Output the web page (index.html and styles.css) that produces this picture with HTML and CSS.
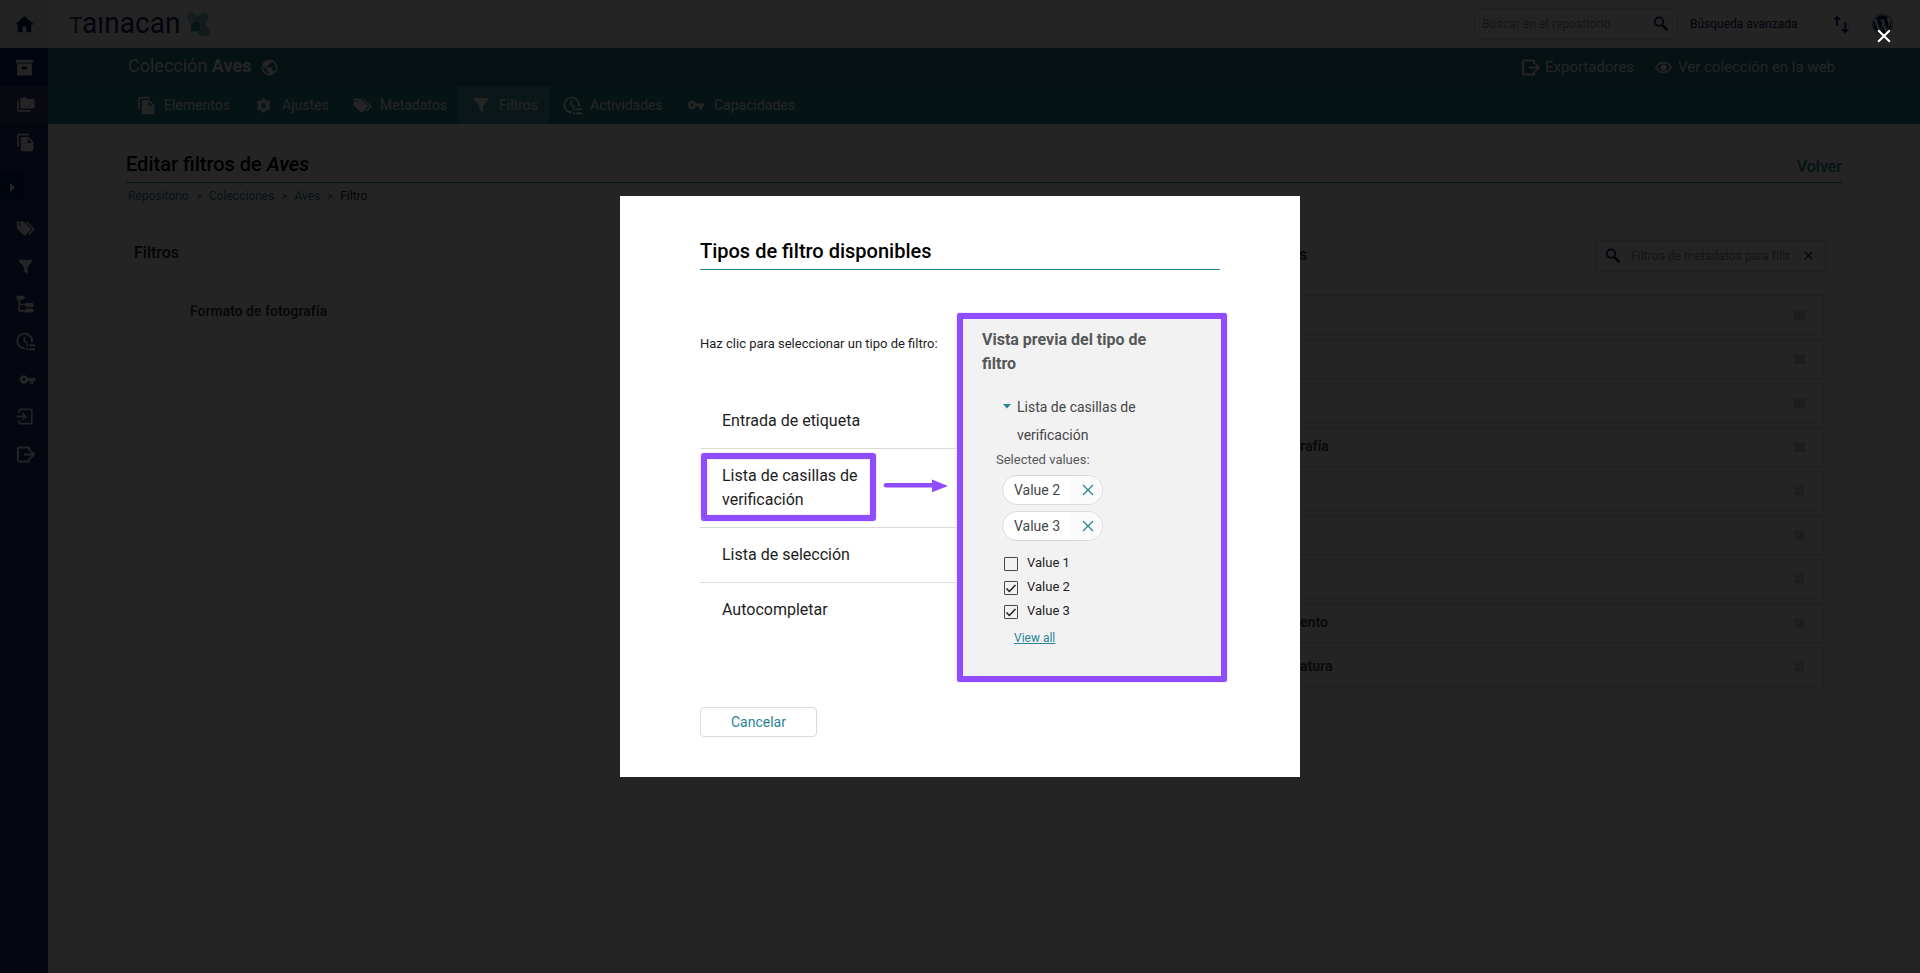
FILE: index.html
```
<!DOCTYPE html>
<html lang="es">
<head>
<meta charset="utf-8">
<title>Tainacan</title>
<link rel="stylesheet" href="styles.css">
</head>
<body>
<svg class="defs" width="0" height="0" aria-hidden="true">
  <symbol id="home" viewBox="0 0 24 24"><path d="M10 20v-6h4v6h5v-8h3L12 3 2 12h3v8z"/></symbol>
  <symbol id="archive" viewBox="0 0 24 24"><path fill-rule="evenodd" d="M2 3h20v3.500H2zM3.500 7.500h17V21h-17zM9 11v3h6v-3z"/></symbol>
  <symbol id="folder" viewBox="0 0 24 24"><path d="M10 3H1v19h22V5H12z"/></symbol>
  <symbol id="folders" viewBox="0 0 24 24"><path d="M3.500 7H1.500v12a2 2 0 0 0 2 2H18.500v-2H3.500zM21.500 5h-7l-2-2H7.500a2 2 0 0 0-2 2v10a2 2 0 0 0 2 2h14a2 2 0 0 0 2-2V7a2 2 0 0 0-2-2z"/></symbol>
  <symbol id="copy" viewBox="0 0 24 24"><path fill-rule="evenodd" d="M16 1H3.500a2 2 0 0 0-2 2v14h2V3H16zM15.500 5H8a2 2 0 0 0-2 2v14a2 2 0 0 0 2 2h12a2 2 0 0 0 2-2V11.500zM14.500 6.700L20.300 12.500H14.500z"/></symbol>
  <symbol id="tags" viewBox="0 0 24 24"><path fill-rule="evenodd" d="M2 3h7.500l9 9a1.500 1.500 0 0 1 0 2l-6.500 6.500a1.500 1.500 0 0 1-2 0L1 12V4a1 1 0 0 1 1-1zM4.500 5.200a1.300 1.300 0 1 0 .1 0z"/><path d="M12 3h2l9 9a1.500 1.500 0 0 1 0 2l-6 6-1.300-1.300 5.300-5.700z"/></symbol>
  <symbol id="filter" viewBox="0 0 24 24"><path d="M2.500 2.500h19v2L15 13v9l-5-3v-6L2.500 4.500z"/></symbol>
  <symbol id="tree" viewBox="0 0 24 24"><path d="M1 1h8l3 2.500L9 6H5v5h7v-1h9l2 2.500-2 2.500h-9v-2H5v6h7v-2h9l2 2.500-2 2.500h-9v-1H3V6H1z"/></symbol>
  <symbol id="activity" viewBox="0 0 24 24"><path d="M11 22a10.500 10.500 0 1 1 10.400-9H18.600A8 8 0 1 0 11 19.300zM9.500 6h2.200v5l4 2.500-1.200 1.800-5-3.200zM12.500 15.500h2.500V18h-2.500zm4 0H24V18h-7.500zM12.500 20.500h2.500V23h-2.500zm4 0H24V23h-7.500z"/></symbol>
  <symbol id="key" viewBox="0 0 24 24"><path fill-rule="evenodd" d="M12.500 10a6 6 0 1 0 0 4H16v4h4v-4h3v-4zM7 10a2 2 0 1 1 0 4 2 2 0 0 1 0-4z"/></symbol>
  <symbol id="import" viewBox="0 0 24 24"><path d="M5 7.500H3V4a2 2 0 0 1 2-2h14a2 2 0 0 1 2 2v16a2 2 0 0 1-2 2H5a2 2 0 0 1-2-2v-3.500h2V20h14V4H5zM1 10.800h8.500L7 8.300l1.500-1.500L14 12l-5.500 5.200L7 15.700l2.500-2.500H1z"/></symbol>
  <symbol id="export" viewBox="0 0 24 24"><path d="M18 7.500h-2.500V4.500H3.800v15h11.700v-3H18V20a2 2 0 0 1-2 2H3.300a2 2 0 0 1-2-2V4a2 2 0 0 1 2-2H16a2 2 0 0 1 2 2zM10 10.700h9.500L17.500 8 19 6.700l5.500 5.300-5.500 5.300-1.500-1.400 2-2.600H10z"/></symbol>
  <symbol id="gear" viewBox="0 0 24 24"><path d="M19.430 12.980c.04-.32.07-.64.07-.98s-.03-.66-.07-.98l2.110-1.650c.19-.15.24-.42.120-.64l-2-3.460c-.12-.22-.39-.3-.61-.22l-2.490 1c-.52-.4-1.080-.73-1.690-.98l-.38-2.650C14.460 2.180 14.250 2 14 2h-4c-.25 0-.46.18-.49.42l-.38 2.650c-.61.25-1.170.59-1.690.98l-2.490-1c-.23-.09-.49 0-.61.22l-2 3.460c-.13.22-.07.49.12.64l2.110 1.650c-.04.32-.07.65-.07.98s.03.66.07.98l-2.110 1.650c-.19.15-.24.42-.12.64l2 3.460c.12.22.39.3.61.22l2.490-1c.52.4 1.080.73 1.690.98l.38 2.650c.03.24.24.42.49.42h4c.25 0 .46-.18.49-.42l.38-2.650c.61-.25 1.170-.59 1.690-.98l2.490 1c.23.09.49 0 .61-.22l2-3.460c.12-.22.07-.49-.12-.64zM12 15.500a3.500 3.500 0 1 1 0-7 3.500 3.500 0 0 1 0 7z"/></symbol>
  <symbol id="globe" viewBox="0 0 24 24"><path d="M12 2a10 10 0 1 0 0 20 10 10 0 0 0 0-20zm-1 17.930A8 8 0 0 1 4.210 10.210L9 15v1a2 2 0 0 0 2 2zm6.900-2.540A2 2 0 0 0 16 16h-1v-3a1 1 0 0 0-1-1H8v-2h2a1 1 0 0 0 1-1V7h2a2 2 0 0 0 2-2v-.41a8 8 0 0 1 2.900 12.800z"/></symbol>
  <symbol id="eye" viewBox="0 0 24 24"><path fill-rule="evenodd" d="M12 4C6.500 4 2 7.300 0 12c2 4.700 6.500 8 12 8s10-3.300 12-8c-2-4.700-6.500-8-12-8zm0 2.300c4.300 0 7.700 2.200 9.400 5.700-1.700 3.500-5.100 5.700-9.400 5.700S4.300 15.500 2.600 12C4.300 8.500 7.700 6.300 12 6.300zM12 7.700a4.300 4.300 0 1 0 0 8.600 4.300 4.300 0 0 0 0-8.600z"/></symbol>
  <symbol id="search" viewBox="0 0 24 24"><circle cx="9" cy="8.500" r="6.300" fill="none" stroke="currentColor" stroke-width="2.600"/><path d="M14 14l6.500 6" fill="none" stroke="currentColor" stroke-width="4" stroke-linecap="round"/></symbol>
  <symbol id="cross" viewBox="0 0 12 12"><path d="M1 1l10 10M11 1L1 11" fill="none" stroke="currentColor" stroke-width="var(--w, 1.500)"/></symbol>
  <symbol id="updown" viewBox="0 0 24 24"><path d="M5.300 14V6H1.500L6.500 1l5 5H7.700v8zM15.500 9H18v9h4l-5.500 5-5.500-5h4.500z"/></symbol>
</svg>

<div class="app">
  <aside class="sidebar">
    <div class="side home"><svg class="i24"><use href="#home"/></svg></div>
    <div class="side repo"><svg class="i20"><use href="#archive"/></svg></div>
    <div class="side active"><svg class="i19"><use href="#folders"/></svg></div>
    <div class="side"><svg class="i19"><use href="#copy"/></svg></div>
    <div class="expand"><svg width="5" height="9" viewBox="0 0 5 9"><path d="M0 0l5 4.500L0 9z"/></svg></div>
    <div class="side"><svg class="i19"><use href="#tags"/></svg></div>
    <div class="side"><svg class="i17"><use href="#filter"/></svg></div>
    <div class="side"><svg class="i19"><use href="#tree"/></svg></div>
    <div class="side"><svg class="i19"><use href="#activity"/></svg></div>
    <div class="side key"><svg class="i17"><use href="#key"/></svg></div>
    <div class="side"><svg class="i19"><use href="#import"/></svg></div>
    <div class="side"><svg class="i19"><use href="#export"/></svg></div>
  </aside>

  <div class="main">
    <header class="topbar">
      <svg class="logo" width="150" height="48" viewBox="0 0 150 48">
        <text x="21.500" y="32.500" textLength="111" lengthAdjust="spacingAndGlyphs"><tspan class="cap">T</tspan>aınacan</text>
      </svg>
      <svg class="flower" width="26" height="26" viewBox="0 0 26 26">
        <ellipse cx="8" cy="8.500" rx="5.400" ry="7.800" transform="rotate(-22 8 8.500)" fill="#8dbfc9" opacity=".85"/>
        <ellipse cx="16.500" cy="9" rx="5.400" ry="8.300" transform="rotate(38 16.500 9)" fill="#6fabb8" opacity=".8"/>
        <ellipse cx="17.500" cy="18.500" rx="5.600" ry="8.300" transform="rotate(-52 17.500 18.500)" fill="#6fabb8" opacity=".85"/>
        <path d="M5.500 20.500l1-6.500c2-4 6-4 8-1.500 2 4-1 8-5 8z" fill="#1f8080" opacity=".9"/>
      </svg>
      <div class="topsearch"><span>Buscar en el repositorio</span><svg class="i16"><use href="#search"/></svg></div>
      <a class="advanced">Búsqueda avanzada</a>
      <svg class="sort"><use href="#updown"/></svg>
      <svg class="wp" width="21" height="21" viewBox="0 0 122.520 122.520"><path d="M8.700 61.260c0 20.800 12.100 38.780 29.600 47.300L13.300 39.870a52.350 52.350 0 0 0-4.600 21.390zM96.700 58.610c0-6.500-2.300-11-4.300-14.500-2.700-4.300-5.200-8-5.200-12.300 0-4.800 3.700-9.300 8.900-9.300h.7a52.350 52.350 0 0 0-79.100 9.900l3.400.1c5.500 0 14-.7 14-.7 2.800-.2 3.100 4 .3 4.300 0 0-2.800.3-6 .5l19.100 56.900 11.500-34.500-8.200-22.400c-2.800-.2-5.500-.5-5.500-.5-2.800-.2-2.500-4.500.3-4.300 0 0 8.700.7 13.800.7 5.500 0 14-.7 14-.7 2.800-.2 3.200 4 .3 4.300 0 0-2.800.3-6 .5l19 56.400 5.200-17.500c2.300-7.200 4-12.400 4-16.900zM62.200 65.860l-15.800 45.800a52.550 52.550 0 0 0 32.300-.8l-.4-.7zM107.400 36.060c1 7.200.1 14.300-3.100 22.300l-16 46.200a52.350 52.350 0 0 0 19.100-68.500z"/><circle cx="61.260" cy="61.260" r="59" fill="none" stroke="currentColor" stroke-width="4"/></svg>
    </header>
    <div class="band">
      <h1>Colección <b>Aves</b></h1><svg class="globe"><use href="#globe"/></svg>
      <div class="band-links">
        <svg class="i19"><use href="#export"/></svg><span class="exp">Exportadores</span>
        <svg class="i17"><use href="#eye"/></svg><span class="see">Ver colección en la web</span>
      </div>
    </div>
    <nav class="tabs">
      <a class="tab"><svg><use href="#copy"/></svg>Elementos</a>
      <a class="tab t2"><svg><use href="#gear"/></svg>Ajustes</a>
      <a class="tab t3"><svg><use href="#tags"/></svg>Metadatos</a>
      <a class="tab t4 current"><svg><use href="#filter"/></svg>Filtros</a>
      <a class="tab t5"><svg><use href="#activity"/></svg>Actividades</a>
      <a class="tab t6"><svg><use href="#key"/></svg>Capacidades</a>
    </nav>
    <section class="page">
      <div class="page-title"><h2>Editar filtros de <i>Aves</i></h2><a>Volver</a></div>
      <div class="crumbs"><a>Repositorio</a><s>&gt;</s><a>Colecciones</a><s>&gt;</s><a>Aves</a><s>&gt;</s><span>Filtro</span></div>
      <div class="columns">
        <div class="filters"><h3>Filtros</h3><p>Formato de fotografía</p></div>
        <div class="available">
          <div class="available-head"><h3>s</h3>
            <div class="metasearch"><svg class="i16"><use href="#search"/></svg><span>Filtros de metadatos para filtr</span><svg class="clear"><use href="#cross"/></svg></div>
          </div>
          <div class="rows">
            <div class="row"><svg><use href="#folder"/></svg></div>
            <div class="row"><svg><use href="#folder"/></svg></div>
            <div class="row"><svg><use href="#folder"/></svg></div>
            <div class="row"><span>rafía</span><svg><use href="#folder"/></svg></div>
            <div class="row"><svg><use href="#archive"/></svg></div>
            <div class="row"><svg><use href="#archive"/></svg></div>
            <div class="row"><svg><use href="#archive"/></svg></div>
            <div class="row"><span>ento</span><svg><use href="#archive"/></svg></div>
            <div class="row"><span>atura</span><svg><use href="#archive"/></svg></div>
          </div>
        </div>
      </div>
    </section>
  </div>
</div>

<div class="overlay">
  <svg class="close"><use href="#cross"/></svg>
  <div class="modal">
    <h2 class="modal-title">Tipos de filtro disponibles</h2>
    <div class="modal-body">
      <div class="types">
        <p class="hint">Haz clic para seleccionar un tipo de filtro:</p>
        <div class="type">Entrada de etiqueta</div>
        <div class="type">Lista de casillas de<br>verificación
          <div class="mark"></div>
          <svg class="arrow" width="66" height="14" viewBox="0 0 66 14"><path d="M3 6.300H50" stroke="#8f4dff" stroke-width="4.600" stroke-linecap="round"/><path d="M49 .5L65 7 49 13.200z" fill="#8f4dff"/></svg>
        </div>
        <div class="type">Lista de selección</div>
        <div class="type">Autocompletar</div>
      </div>
      <div class="preview">
        <h3>Vista previa del tipo de<br>filtro</h3>
        <div class="collapse"><svg width="8" height="5" viewBox="0 0 8 5"><path d="M0 0h8L4 4.500z"/></svg><span>Lista de casillas de<br>verificación</span></div>
        <p class="selected">Selected values:</p>
        <div class="chip"><span>Value 2</span><div><svg><use href="#cross"/></svg></div></div>
        <div class="chip"><span>Value 3</span><div><svg><use href="#cross"/></svg></div></div>
        <div class="checks">
          <label><i class="box"></i>Value 1</label>
          <label><i class="box"><svg viewBox="0 0 12 12"><path d="M1.500 6.500l2.800 3L10.500 3"/></svg></i>Value 2</label>
          <label><i class="box"><svg viewBox="0 0 12 12"><path d="M1.500 6.500l2.800 3L10.500 3"/></svg></i>Value 3</label>
        </div>
        <a class="viewall">View all</a>
      </div>
    </div>
    <button class="cancel">Cancelar</button>
  </div>
</div>
</body>
</html>
```
FILE: styles.css
```
* { box-sizing: border-box; }
body { margin: 0; width: 1920px; height: 973px; overflow: hidden; font-family: Roboto, "Liberation Sans", sans-serif; background: #fff; color: #1d1d1d; }
h1, h2, h3, p { margin: 0; font-weight: 500; }
svg { flex: none; fill: currentColor; display: block; }
.defs { position: absolute; }
.i24 { width: 23px; height: 23px; }
.i20 { width: 21px; height: 21px; }
.i19 { width: 19px; height: 19px; }
.i17 { width: 17px; height: 17px; }
.i16 { width: 16px; height: 16px; }

.app { display: flex; height: 973px; }
.sidebar { width: 48px; background: #1f2f70; color: #fff; display: flex; flex-direction: column; }
.side { height: 37.600px; display: flex; align-items: center; justify-content: center; padding-left: 2px; }
.home { height: 48px; background: #f2f2f2; color: #01295c; padding: 0; }
.repo { height: 38px; background: #01295c; padding: 1px 0 0; }
.active { background: #3a4170; }
.key { padding-left: 7px; }
.expand { width: 25px; height: 25px; margin: 13px 0 11px; background: #01295c; display: flex; align-items: center; padding: 2px 0 0 10px; }

.main { flex: 1; display: flex; flex-direction: column; }
.topbar { height: 48px; display: flex; align-items: center; color: #01295c; }
.logo text { font-size: 30px; fill: #1c2452; }
.logo .cap { font-size: 22.500px; }
.flower { margin-left: -13px; margin-right: 1263px; }
.topsearch { width: 204px; height: 32px; border: 1px solid #dbdbdb; display: flex; align-items: center; justify-content: space-between; padding: 0 8px 0 7px; font-size: 12px; letter-spacing: .12px; }
.topsearch span { color: #898d8f; }
.advanced { font-size: 12px; margin-left: 12px; width: 107px; white-space: nowrap; }
.sort { width: 19px; height: 19px; margin-left: 35px; }
.wp { margin-left: 21px; }

.band { height: 38px; background: #257787; color: #fff; display: flex; align-items: center; padding-left: 80px; }
.band h1 { font-size: 18px; font-weight: 400; width: 123px; white-space: nowrap; padding-bottom: 4px; }
.globe { width: 19px; height: 19px; margin: 1px 0 0 9px; }
.band-links { margin-left: auto; margin-right: 85px; display: flex; align-items: center; font-size: 15px; white-space: nowrap; }
.exp { width: 89px; margin: 0 21px 0 5px; }
.see { width: 157px; margin-left: 6px; }
.tabs { height: 38px; background: #298596; color: #fff; display: flex; padding-left: 75px; }
.tab { width: 118px; padding-left: 14px; display: flex; align-items: center; gap: 7px; font-size: 14px; white-space: nowrap; }
.tab svg { width: 19px; height: 19px; margin-right: 1px; }
.tab.t2 svg { width: 17px; height: 17px; margin: 0 3px 0 0; }
.tab.t4 svg, .tab.t6 svg { width: 18px; height: 18px; margin: 0 2px 0 0; }
.t2 { width: 98px; }
.t3 { width: 119px; }
.t4 { width: 91px; }
.t5 { width: 124px; }
.current { background: #539daa; }

.page { padding: 28px 78px 0; }
.page-title { height: 31px; border-bottom: 1px solid #298596; display: flex; justify-content: space-between; color: #000; }
.page-title h2 { font-size: 20px; line-height: 25px; }
.page-title a { font-size: 16px; font-weight: 500; line-height: 29px; color: #298596; }
.page-title i { font-weight: 600; }
.crumbs { display: flex; height: 26px; align-items: center; font-size: 12px; padding-left: 2px; color: #298596; }
.crumbs s { text-decoration: none; width: 20px; text-align: center; color: #454647; font-size: 11px; }
.crumbs span { color: #1d1d1d; }
.columns { display: grid; grid-template-columns: 870px 1fr; padding-top: 31px; }
.filters { padding: 1px 0 0 8px; color: #1d1d1d; }
.columns h3 { font-size: 16px; line-height: 24px; }
.filters p { margin: 34px 0 0 56px; font-size: 14px; line-height: 24px; font-weight: 700; color: #454647; }
.available-head { display: flex; justify-content: space-between; padding-left: 303px; margin-right: 16px; }
.available-head h3 { padding-top: 3px; }
.metasearch { width: 231px; height: 32px; border: 1px solid #dbdbdb; display: flex; align-items: center; color: #01295c; padding: 0 0 1px 9px; }
.metasearch span { width: 160px; margin: 0 13px 0 10px; white-space: nowrap; font-size: 12px; letter-spacing: .05px; color: #898d8f; }
.clear { width: 9px; height: 9px; color: #1d1d1d; --w: 1.600; }
.rows { display: grid; gap: 4px; margin: 23px 18px 0 0; }
.row { height: 40px; border: 1px solid #dbdbdb; border-radius: 1px; display: flex; align-items: center; padding: 0 17px 0 303px; font-size: 14px; font-weight: 700; color: #454647; }
.row span { margin-bottom: 3px; }
.row svg { width: 13px; height: 13px; margin: 0 0 1px auto; color: #cbcbcb; }

.overlay { position: fixed; inset: 0; background: rgba(0, 0, 0, .86); display: flex; align-items: center; justify-content: center; }
.close { position: absolute; left: 1877px; top: 29px; width: 14px; height: 14px; color: #fff; --w: 1.800; }
.modal { width: 680px; height: 581px; background: #fff; padding: 40px 80px; }
.modal-title { height: 34px; border-bottom: 1px solid #298596; font-size: 20px; line-height: 30px; color: #000; }
.modal-body { display: grid; grid-template-columns: 257px 270px; width: 527px; padding-top: 43px; }
.hint { font-size: 13px; line-height: 20px; font-weight: 400; white-space: nowrap; margin: 21px 0 40px; }
.type { position: relative; font-size: 16px; line-height: 24px; padding: 15px 0 15px 22px; border-bottom: 1px solid #dbdbdb; }
.type:last-child { border: 0; }
.mark { position: absolute; left: 1px; top: 4px; width: 175px; height: 68px; border: 6px solid #8f4dff; border-radius: 3px; box-shadow: 0 0 1px #8f4dff, inset 0 0 1px #8f4dff; }
.arrow { position: absolute; left: 183px; top: 30px; }
.preview { height: 369px; border: 6px solid #8f4dff; border-radius: 3px; background: #f2f2f2; padding: 9px 19px; color: #454647; box-shadow: 0 0 1px #8f4dff; }
.preview h3 { font-size: 16px; line-height: 24px; font-weight: 700; color: #555758; }
.collapse { display: flex; gap: 6px; margin: 17px 0 0 21px; font-size: 14px; line-height: 28px; }
.collapse svg { margin-top: 11px; color: #298596; }
.selected { margin: 1px 0 5px 14px; font-size: 13px; line-height: 20px; font-weight: 400; color: #555758; }
.chip { width: 101px; height: 30px; margin: 0 0 6px 20px; border: 1px solid #dbdbdb; border-radius: 15px; background: #fff; display: flex; align-items: center; justify-content: space-between; padding-left: 11px; overflow: hidden; font-size: 14px; }
.chip div { width: 31px; height: 28px; padding: 8px 0 0 11px; background: #fafafa; }
.chip svg { width: 12px; height: 12px; color: #298596; --w: 1.300; }
.checks { margin: 10px 0 0 22px; }
.checks label { display: flex; align-items: center; height: 24px; font-size: 13px; color: #1d1d1d; padding-bottom: 1px; }
.box { width: 14px; height: 14px; border: 1px solid #454647; border-radius: 1px; margin: 2px 9px 0 0; }
.box path { fill: none; stroke: #1d1d1d; stroke-width: 1.500; }
.viewall { display: block; margin: 6px 0 0 32px; font-size: 12px; line-height: 18px; color: #298596; text-decoration: underline; }
.cancel { display: block; margin-top: 25px; width: 117px; height: 30px; border: 1px solid #dbdbdb; border-radius: 4px; background: #fff; color: #298596; font: 14px Roboto, sans-serif; padding: 0; }
```
